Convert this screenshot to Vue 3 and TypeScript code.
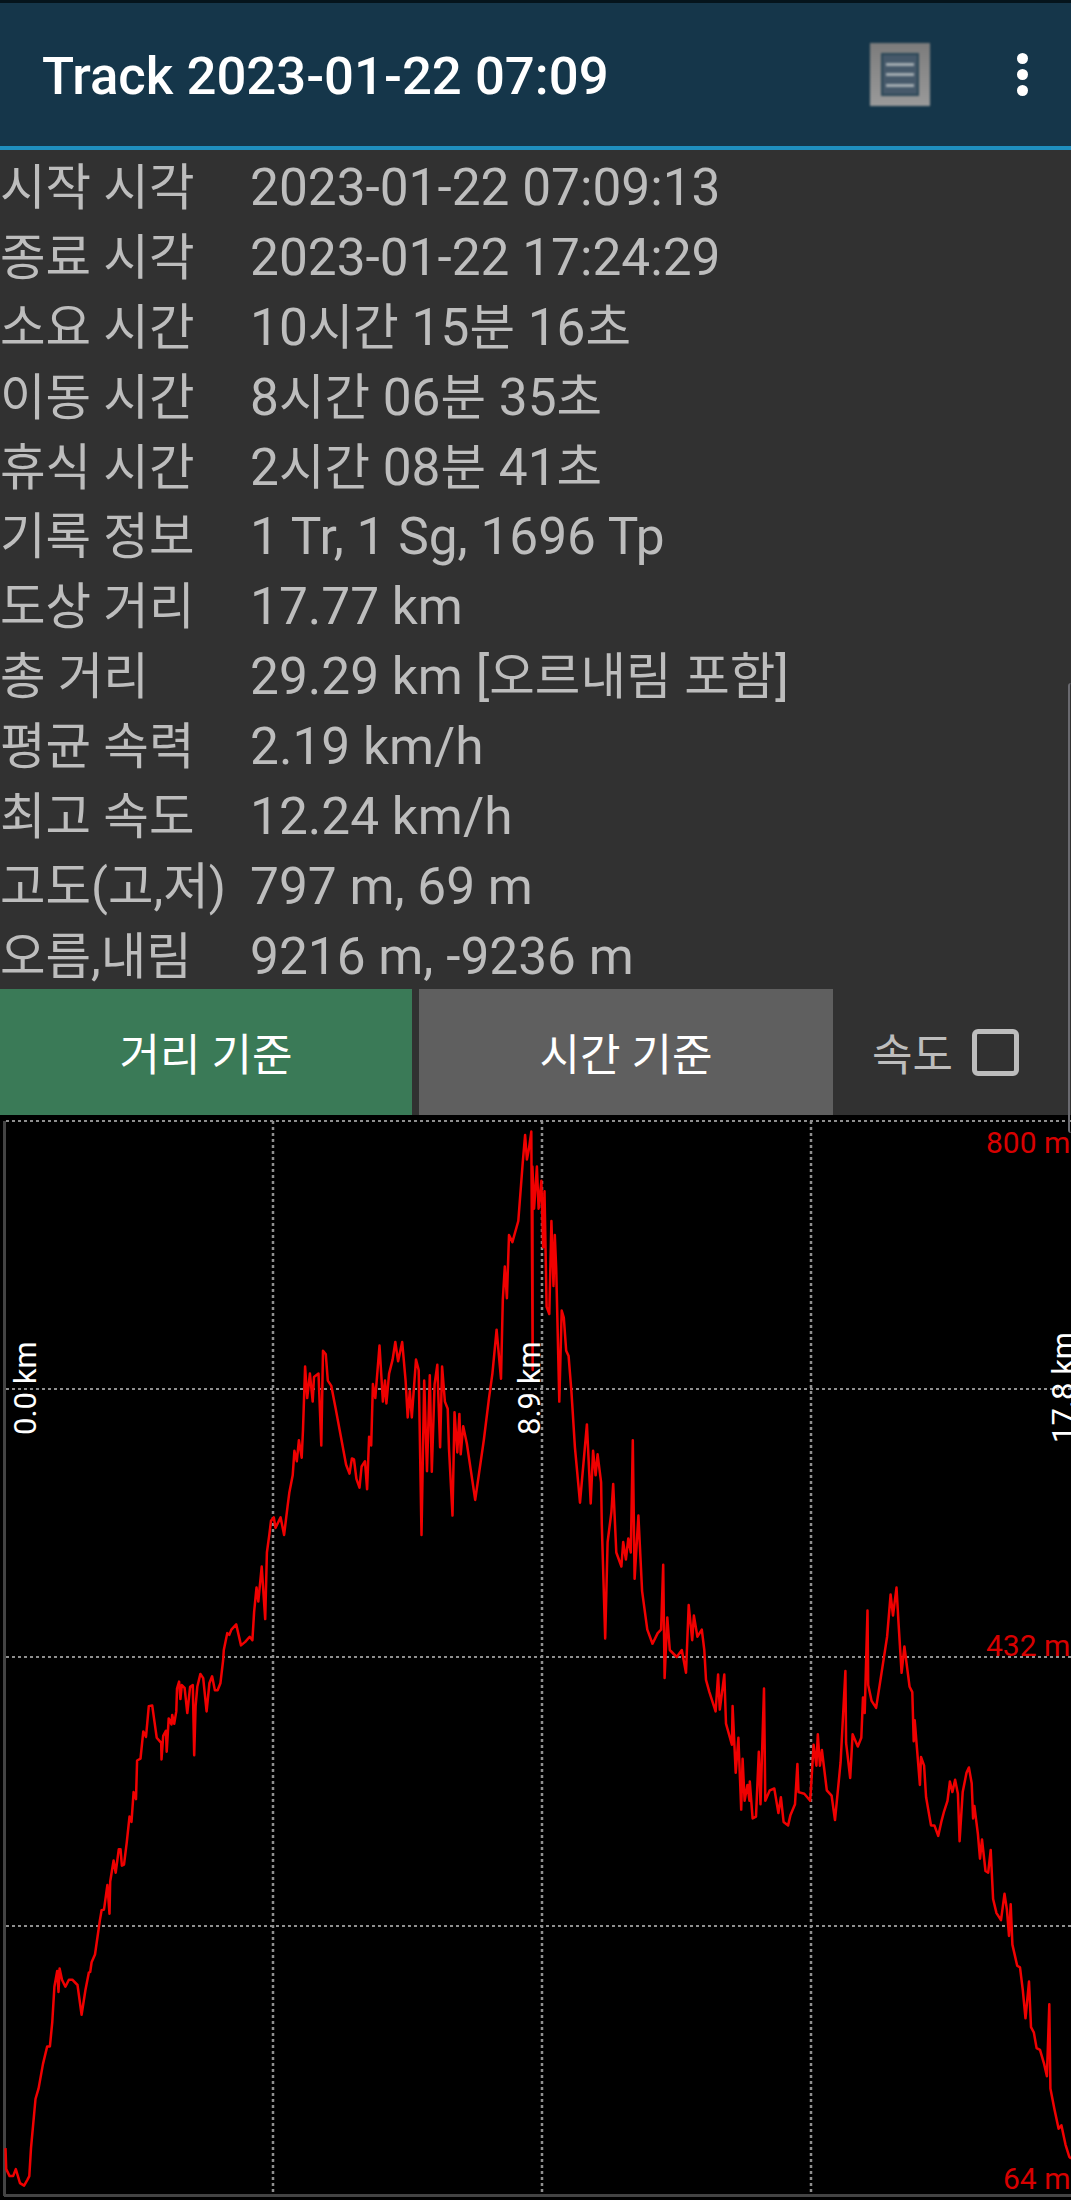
<script setup lang="ts">
const rows: [string, string][] = [
  ['시작 시각', '2023-01-22 07:09:13'],
  ['종료 시각', '2023-01-22 17:24:29'],
  ['소요 시간', '10시간 15분 16초'],
  ['이동 시간', '8시간 06분 35초'],
  ['휴식 시간', '2시간 08분 41초'],
  ['기록 정보', '1 Tr, 1 Sg, 1696 Tp'],
  ['도상 거리', '17.77 km'],
  ['총 거리', '29.29 km [오르내림 포함]'],
  ['평균 속력', '2.19 km/h'],
  ['최고 속도', '12.24 km/h'],
  ['고도(고,저)', '797 m, 69 m'],
  ['오름,내림', '9216 m, -9236 m'],
]

// Hangul is set a touch smaller than the Latin digits, so split each value into runs
function runs(text: string): { t: string; ko: boolean }[] {
  const parts = text.match(/[\uac00-\ud7a3]+|[^\uac00-\ud7a3]+/g) ?? []
  return parts.map((t) => ({ t, ko: /[\uac00-\ud7a3]/.test(t) }))
}

const CH = 1115 // chart top in page coordinates

// Traced from the profile, in [xOffset, xScale, yOffset, yScale, flat points]
const traced: [number, number, number, number, number[]][] = [
  [0, 2.904, 1650, 2.851, [16,1420,18,1480,28,1500,38,1500,46,1480,58,1520,70,1527,80,1510,85,1500,90,1420,103,1280,112,1250,125,1180,137,1130,145,1130,152,1060,158,960,166,915,170,975,173,908,180,940,190,960,200,940,210,940,225,955,237,1040,248,970,258,920,262,918,266,890,276,868,290,770,295,742,302,740,312,670,318,752,320,660,330,600,336,635,345,568,350,568,354,615,360,612,368,550,376,475,382,490,388,405,395,425,398,315,408,310,416,232,424,248,432,160,442,158,455,250,468,265,469,312,474,245,482,230,484,290,490,195,498,212,500,185,506,210,512,175,514,110,520,90,524,140,528,100,536,108,544,180,552,105,560,100,564,300,568,160,573,105,582,68,590,80,600,175,608,95,616,75,624,115,632,115,640,95,648,30]],
  [0, 2.904, 1100, 2.851, [650,1568,660,1520,666,1525,672,1510,686,1495,700,1555,712,1545,725,1530,733,1540,738,1460,745,1390,750,1430,760,1330,770,1480,775,1290,782,1240,787,1200,795,1190,800,1220,815,1190,825,1240,835,1160,840,1120,850,1070,855,1000,862,1030,868,970,876,1020,880,940,886,760,892,850,900,780,908,860,912,790,925,780,933,985,938,715,946,725,952,800,962,815,975,880,990,960,1005,1040,1015,1065,1022,1022,1028,1025,1035,1080,1044,1105,1050,1045,1060,1030,1066,1110,1072,960,1078,985,1083,810,1090,850,1102,700,1112,860,1118,800,1122,865,1130,780,1140,740,1148,690,1156,745,1168,690,1178,800,1184,905,1190,830,1196,905,1208,740,1216,770,1224,1240,1232,800,1240,1058,1248,785,1254,1060,1262,810,1270,755,1278,990,1284,760,1292,860,1300,880,1304,995,1314,1185,1320,890,1328,1005,1334,895,1338,1010,1345,930,1356,980,1380,1140,1405,970,1420,850,1430,780,1442,655,1455,795,1460,570,1466,475,1472,565,1478,385,1488,405,1505,345,1518,180,1525,100,1530,170,1536,140,1543,90,1547,770]],
  [530, 2.898, 1100, 2.851, [7,190,12,310,20,190,25,310,33,230,38,420,42,260,48,590,56,610,62,345,68,530,72,385,76,480,85,860,92,600,98,620,105,715,112,730,120,830,130,990,145,1148,165,925,176,1150,183,1000,190,1070,196,1010,206,1090,208,1210,218,1535,225,1260,236,1175,241,1095,250,1290,265,1330,270,1260,278,1310,285,1250,292,1290,298,970,303,1365,314,1185,325,1400,340,1510,355,1550,370,1520,380,1510,386,1325,390,1648,398,1475,405,1568,425,1588,440,1568,452,1633,460,1440,470,1540,475,1470,485,1530,498,1510,505,1568]],
  [530, 2.898, 1650, 2.851, [510,85,520,120,538,175,545,70,550,170,563,70,568,210,585,270,587,160,596,350,604,250,612,455,616,310,622,430,630,385,636,430,637,375,645,480,655,475,663,290,668,440,678,110,682,430,695,400,708,395,720,465,727,420,735,490,748,500,755,470,768,440,775,325,778,405,795,410,812,430,822,270,830,330,834,240,840,330,846,285,860,400,874,415,884,485,900,320,914,60,916,265,928,365,935,240,950,275,960,250,965,135,970,180,978,-113,980,100,990,145,1003,165,1015,90,1035,-38,1045,-158,1052,-98,1062,-178,1068,-78,1077,65,1085,-10,1100,105,1108,120,1112,260,1115,200,1130,385,1133,305,1142,330,1148,420,1162,500,1172,500,1183,530,1192,490,1200,460,1210,430,1217,375,1224,405,1232,370,1240,410,1245,545,1254,405,1265,350,1272,335,1280,380,1284,480,1288,445,1298,525,1304,595,1310,540,1320,630,1328,635,1335,570,1342,710,1352,750,1365,770,1375,695,1382,740,1388,815,1393,725,1398,840,1412,900,1420,905,1428,970,1436,1050,1446,945,1452,1075,1460,1090,1468,1135,1478,1140,1490,1180,1498,1215,1505,1010,1508,1250,1520,1310,1532,1365,1540,1355,1552,1410,1563,1445,1568,1450]],
]

const profile: string = traced
  .map(([ox, sx, oy, sy, p]) => {
    const out: string[] = []
    for (let i = 0; i < p.length; i += 2) {
      out.push(`${(ox + p[i] / sx).toFixed(1)},${(oy + p[i + 1] / sy - CH).toFixed(1)}`)
    }
    return out.join(' ')
  })
  .join(' ')

const hLines: number[] = [1121, 1389, 1657, 1926].map((y) => y - CH)
const vLines: number[] = [273, 542, 811]
</script>

<template>
  <div class="screen">
    <header class="bar">
      <div class="title">Track 2023-01-22 07:09</div>
      <div class="list-icon">
        <div class="list-inner">
          <span></span><span></span><span></span>
        </div>
      </div>
      <div class="more"><i></i><i></i><i></i></div>
    </header>

    <section class="stats">
      <div v-for="r in rows" :key="r[0]" class="row">
        <div class="label">{{ r[0] }}</div>
        <div class="value">
          <span v-for="(p, i) in runs(r[1])" :key="i" :class="{ ko: p.ko }">{{ p.t }}</span>
        </div>
      </div>
    </section>

    <section class="actions">
      <button class="btn green">거리 기준</button>
      <button class="btn grey">시간 기준</button>
      <div class="speed">
        <span>속도</span>
        <span class="check"></span>
      </div>
    </section>

    <section class="chart">
      <svg width="1071" height="1085" viewBox="0 0 1071 1085">
        <line v-for="y in hLines" :key="y" class="h" x1="6" x2="1071" :y1="y" :y2="y" />
        <line v-for="x in vLines" :key="x" class="v" :x1="x" :x2="x" y1="6" y2="1080" />
        <line class="frame" x1="4.5" x2="4.5" y1="6" y2="1081" />
        <line class="frame" x1="4" x2="1071" y1="1080.5" y2="1080.5" />
        <polyline class="profile" :points="profile" />
        <text class="km" transform="translate(36 320) rotate(-90)">0.0 km</text>
        <text class="km" transform="translate(540 320) rotate(-90)">8.9 km</text>
        <text class="km" transform="translate(1074 328) rotate(-90)">17.8 km</text>
        <text class="alt" x="986" y="38">800 m</text>
        <text class="alt" x="986" y="541">432 m</text>
        <text class="alt" x="1003" y="1074">64 m</text>
      </svg>
    </section>

    <div class="edge"></div>
  </div>
</template>

<style scoped>
.screen {
  position: relative;
  width: 1071px;
  height: 2200px;
  overflow: hidden;
  background: #313131;
  font-family: Roboto, "Noto Sans CJK KR", sans-serif;
  display: flex;
  flex-direction: column;
}
.bar {
  height: 150px;
  box-sizing: border-box;
  border-top: 3px solid #05141c;
  border-bottom: 4px solid #1f8fbf;
  background: #15364a;
  display: flex;
  align-items: center;
  padding: 0 42px;
  flex: none;
}
.title {
  flex: 1;
  color: #fff;
  font-size: 52.7px;
  font-weight: 500;
  white-space: nowrap;
  padding-top: 3px;
}
.list-icon {
  width: 60px;
  height: 63px;
  margin-right: 84px;
  background: linear-gradient(#7c7c7c, #9a9a9a);
  display: flex;
  align-items: center;
  justify-content: center;
  filter: blur(0.8px);
}
.list-inner {
  width: 38px;
  height: 43px;
  box-sizing: border-box;
  background: #46596a;
  border: 2px solid #2a4656;
  display: flex;
  flex-direction: column;
  justify-content: space-evenly;
  padding: 0 3px;
}
.list-inner span {
  height: 3px;
  background: #a4adb2;
}
.more {
  width: 16px;
  margin-right: -1px;
  display: flex;
  flex-direction: column;
  align-items: center;
  gap: 5px;
}
.more i {
  width: 11px;
  height: 11px;
  border-radius: 50%;
  background: #fff;
}
.stats {
  flex: none;
  height: 839px;
  padding-top: 3px;
  box-sizing: border-box;
}
.row {
  height: 69.9px;
  line-height: 70px;
  display: flex;
  align-items: baseline;
  color: #bdbdbd;
  font-size: 51.4px;
  white-space: nowrap;
}
.label {
  width: 250px;
  flex: none;
  font-size: 49.5px;
}
.ko {
  font-size: 49.5px;
}
.actions {
  flex: none;
  height: 126px;
  display: flex;
  gap: 7px;
  align-items: stretch;
  position: relative;
}
.btn {
  border: 0;
  padding: 0;
  font: inherit;
  font-size: 44px;
  color: #fff;
}
.green {
  width: 412px;
  background: #3a7a57;
}
.grey {
  width: 414px;
  background: #5f5f5f;
}
.speed {
  flex: 1;
  display: flex;
  align-items: center;
  padding-left: 32px;
  color: #bdbdbd;
  font-size: 44px;
}
.check {
  width: 47px;
  height: 47px;
  margin-left: 19px;
  box-sizing: border-box;
  border: 5px solid #bdbdbd;
  border-radius: 6px;
}
.chart {
  flex: none;
  height: 1085px;
  background: #000;
}
.chart svg {
  display: block;
}
.h {
  stroke: #8f8f8f;
  stroke-width: 2;
  stroke-dasharray: 3 3;
}
.v {
  stroke: #8f8f8f;
  stroke-width: 2.5;
  stroke-dasharray: 3 3;
}
.frame {
  stroke: #444;
  stroke-width: 3;
}
.profile {
  fill: none;
  stroke: #f00000;
  stroke-width: 2.5;
  stroke-linejoin: round;
}
.km {
  fill: #fff;
  font-size: 31px;
}
.alt {
  fill: #d80000;
  font-size: 30px;
}
.edge {
  position: absolute;
  left: 1068px;
  top: 683px;
  width: 6px;
  height: 450px;
  box-sizing: border-box;
  border-left: 2px solid #6a6a70;
  border-radius: 6px;
}
</style>
